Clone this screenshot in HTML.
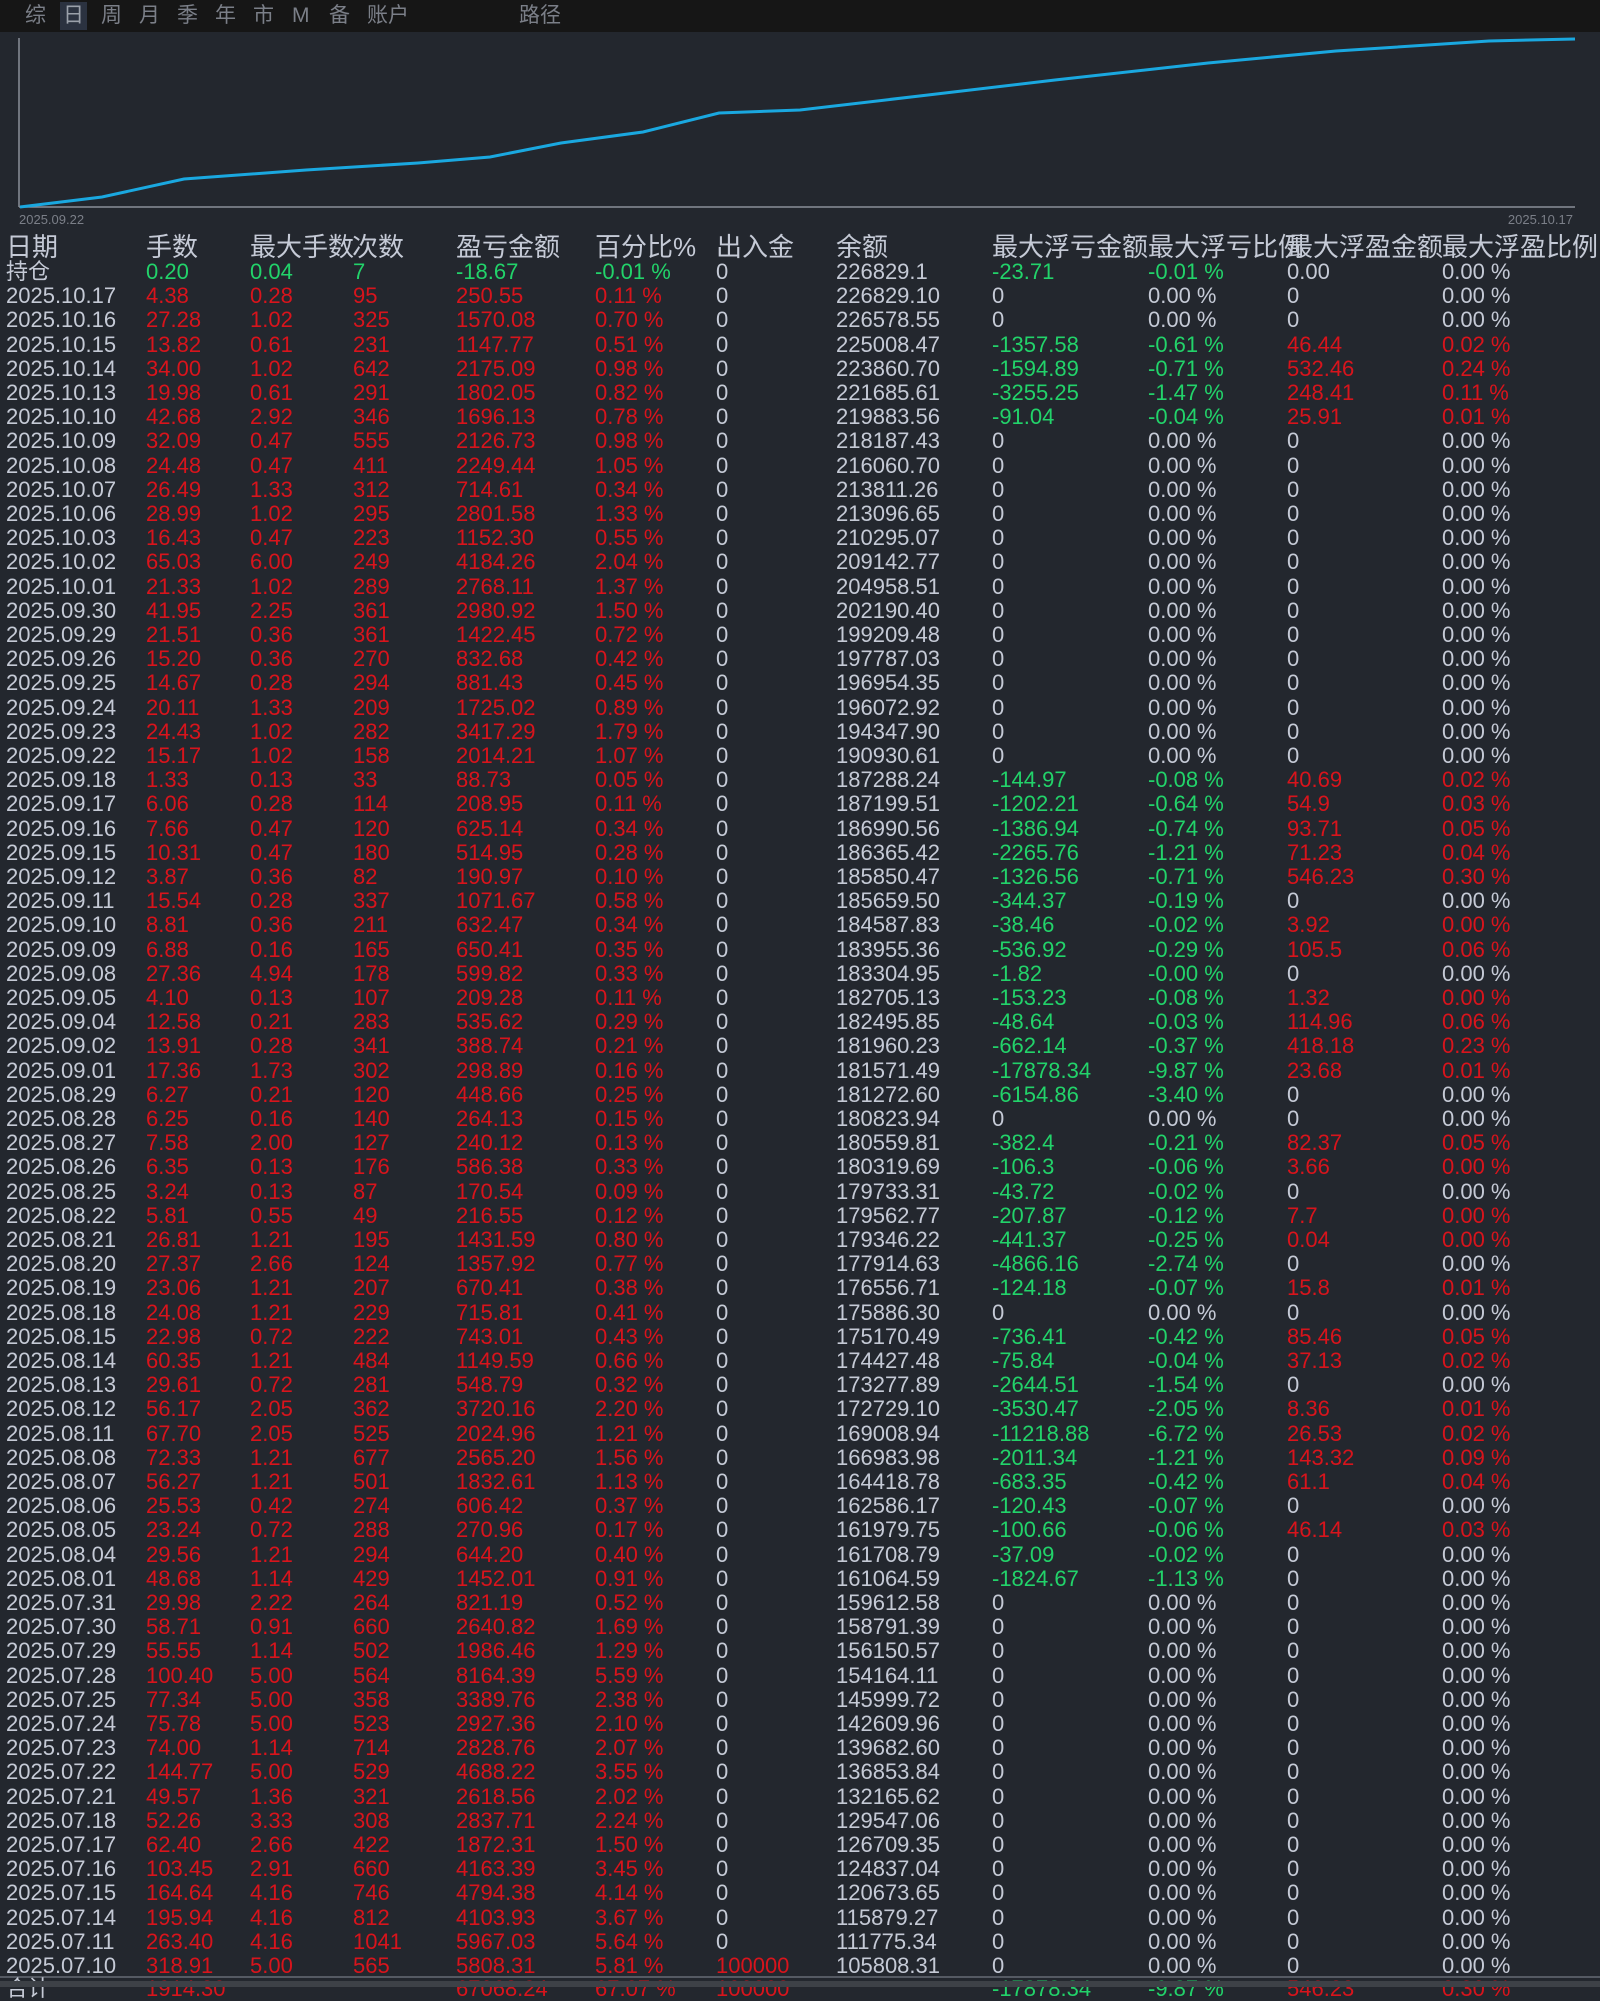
<!DOCTYPE html>
<html><head><meta charset="utf-8">
<style>
html,body{margin:0;padding:0;}
body{width:1600px;height:1987px;background:#23272e;position:relative;overflow:hidden;font-family:"Liberation Sans","Noto Sans CJK SC",sans-serif;color:#c5cad6;}
.top{position:absolute;left:0;top:0;width:1600px;height:32px;background:#161616;}
.tab{position:absolute;top:2px;font-size:21px;color:#7b7f88;line-height:28px;}
.sel{background:#2b3240;color:#9aa0aa;padding:0 3px;}
.r{position:absolute;left:0;height:24px;line-height:24px;font-size:22px;white-space:nowrap;width:1600px;}
.r span{position:absolute;top:0;}
.r span:nth-child(1){left:6px}
.r span:nth-child(2){left:146px}
.r span:nth-child(3){left:250px}
.r span:nth-child(4){left:353px}
.r span:nth-child(5){left:456px}
.r span:nth-child(6){left:595px}
.r span:nth-child(7){left:716px}
.r span:nth-child(8){left:836px}
.r span:nth-child(9){left:992px}
.r span:nth-child(10){left:1148px}
.r span:nth-child(11){left:1287px}
.r span:nth-child(12){left:1442px}
.d span:nth-child(n+2):nth-child(-n+6){color:#d8141c}
.h{font-size:26px;height:28px;line-height:28px;}
.g{color:#22d36a!important}
.e{color:#d8141c!important}
</style></head><body>
<div class="top"></div>
<div class="tab" style="left:25px">综</div>
<div class="tab sel" style="left:60px">日</div>
<div class="tab" style="left:101px">周</div>
<div class="tab" style="left:139px">月</div>
<div class="tab" style="left:177px">季</div>
<div class="tab" style="left:215px">年</div>
<div class="tab" style="left:253px">市</div>
<div class="tab" style="left:292px">M</div>
<div class="tab" style="left:329px">备</div>
<div class="tab" style="left:367px">账户</div>
<div class="tab" style="left:519px">路径</div>

<svg style="position:absolute;left:0;top:0" width="1600" height="230">
<line x1="19" y1="38" x2="19" y2="207" stroke="#8a8f98" stroke-width="1.5"/>
<line x1="19" y1="207" x2="1575" y2="207" stroke="#8a8f98" stroke-width="1.5"/>
<polyline fill="none" stroke="#1aa8e0" stroke-width="3" points="20,207 102,197 184,179 306,170 418,163 490,157 561,143 643,132 719,113 800,110 928,95 1055,80 1208,63 1336,51 1489,41 1575,39"/>
<text x="19" y="224" font-family="Liberation Sans" font-size="13" fill="#7b7f88">2025.09.22</text>
<text x="1573" y="224" font-family="Liberation Sans" font-size="13" fill="#7b7f88" text-anchor="end">2025.10.17</text>
</svg>

<div class="r h" style="top:233px"><span>日期</span><span>手数</span><span>最大手数</span><span style="left:352px">次数</span><span>盈亏金额</span><span>百分比%</span><span>出入金</span><span>余额</span><span>最大浮亏金额</span><span>最大浮亏比例</span><span>最大浮盈金额</span><span>最大浮盈比例</span></div>

<div class="r" style="top:260px"><span>持仓</span><span class="g">0.20</span><span class="g">0.04</span><span class="g">7</span><span class="g">-18.67</span><span class="g">-0.01 %</span><span>0</span><span>226829.1</span><span class="g">-23.71</span><span class="g">-0.01 %</span><span>0.00</span><span>0.00 %</span></div>
<div class="r d" style="top:284px"><span>2025.10.17</span><span>4.38</span><span>0.28</span><span>95</span><span>250.55</span><span>0.11 %</span><span>0</span><span>226829.10</span><span>0</span><span>0.00 %</span><span>0</span><span>0.00 %</span></div>
<div class="r d" style="top:308px"><span>2025.10.16</span><span>27.28</span><span>1.02</span><span>325</span><span>1570.08</span><span>0.70 %</span><span>0</span><span>226578.55</span><span>0</span><span>0.00 %</span><span>0</span><span>0.00 %</span></div>
<div class="r d" style="top:333px"><span>2025.10.15</span><span>13.82</span><span>0.61</span><span>231</span><span>1147.77</span><span>0.51 %</span><span>0</span><span>225008.47</span><span class="g">-1357.58</span><span class="g">-0.61 %</span><span class="e">46.44</span><span class="e">0.02 %</span></div>
<div class="r d" style="top:357px"><span>2025.10.14</span><span>34.00</span><span>1.02</span><span>642</span><span>2175.09</span><span>0.98 %</span><span>0</span><span>223860.70</span><span class="g">-1594.89</span><span class="g">-0.71 %</span><span class="e">532.46</span><span class="e">0.24 %</span></div>
<div class="r d" style="top:381px"><span>2025.10.13</span><span>19.98</span><span>0.61</span><span>291</span><span>1802.05</span><span>0.82 %</span><span>0</span><span>221685.61</span><span class="g">-3255.25</span><span class="g">-1.47 %</span><span class="e">248.41</span><span class="e">0.11 %</span></div>
<div class="r d" style="top:405px"><span>2025.10.10</span><span>42.68</span><span>2.92</span><span>346</span><span>1696.13</span><span>0.78 %</span><span>0</span><span>219883.56</span><span class="g">-91.04</span><span class="g">-0.04 %</span><span class="e">25.91</span><span class="e">0.01 %</span></div>
<div class="r d" style="top:429px"><span>2025.10.09</span><span>32.09</span><span>0.47</span><span>555</span><span>2126.73</span><span>0.98 %</span><span>0</span><span>218187.43</span><span>0</span><span>0.00 %</span><span>0</span><span>0.00 %</span></div>
<div class="r d" style="top:454px"><span>2025.10.08</span><span>24.48</span><span>0.47</span><span>411</span><span>2249.44</span><span>1.05 %</span><span>0</span><span>216060.70</span><span>0</span><span>0.00 %</span><span>0</span><span>0.00 %</span></div>
<div class="r d" style="top:478px"><span>2025.10.07</span><span>26.49</span><span>1.33</span><span>312</span><span>714.61</span><span>0.34 %</span><span>0</span><span>213811.26</span><span>0</span><span>0.00 %</span><span>0</span><span>0.00 %</span></div>
<div class="r d" style="top:502px"><span>2025.10.06</span><span>28.99</span><span>1.02</span><span>295</span><span>2801.58</span><span>1.33 %</span><span>0</span><span>213096.65</span><span>0</span><span>0.00 %</span><span>0</span><span>0.00 %</span></div>
<div class="r d" style="top:526px"><span>2025.10.03</span><span>16.43</span><span>0.47</span><span>223</span><span>1152.30</span><span>0.55 %</span><span>0</span><span>210295.07</span><span>0</span><span>0.00 %</span><span>0</span><span>0.00 %</span></div>
<div class="r d" style="top:550px"><span>2025.10.02</span><span>65.03</span><span>6.00</span><span>249</span><span>4184.26</span><span>2.04 %</span><span>0</span><span>209142.77</span><span>0</span><span>0.00 %</span><span>0</span><span>0.00 %</span></div>
<div class="r d" style="top:575px"><span>2025.10.01</span><span>21.33</span><span>1.02</span><span>289</span><span>2768.11</span><span>1.37 %</span><span>0</span><span>204958.51</span><span>0</span><span>0.00 %</span><span>0</span><span>0.00 %</span></div>
<div class="r d" style="top:599px"><span>2025.09.30</span><span>41.95</span><span>2.25</span><span>361</span><span>2980.92</span><span>1.50 %</span><span>0</span><span>202190.40</span><span>0</span><span>0.00 %</span><span>0</span><span>0.00 %</span></div>
<div class="r d" style="top:623px"><span>2025.09.29</span><span>21.51</span><span>0.36</span><span>361</span><span>1422.45</span><span>0.72 %</span><span>0</span><span>199209.48</span><span>0</span><span>0.00 %</span><span>0</span><span>0.00 %</span></div>
<div class="r d" style="top:647px"><span>2025.09.26</span><span>15.20</span><span>0.36</span><span>270</span><span>832.68</span><span>0.42 %</span><span>0</span><span>197787.03</span><span>0</span><span>0.00 %</span><span>0</span><span>0.00 %</span></div>
<div class="r d" style="top:671px"><span>2025.09.25</span><span>14.67</span><span>0.28</span><span>294</span><span>881.43</span><span>0.45 %</span><span>0</span><span>196954.35</span><span>0</span><span>0.00 %</span><span>0</span><span>0.00 %</span></div>
<div class="r d" style="top:696px"><span>2025.09.24</span><span>20.11</span><span>1.33</span><span>209</span><span>1725.02</span><span>0.89 %</span><span>0</span><span>196072.92</span><span>0</span><span>0.00 %</span><span>0</span><span>0.00 %</span></div>
<div class="r d" style="top:720px"><span>2025.09.23</span><span>24.43</span><span>1.02</span><span>282</span><span>3417.29</span><span>1.79 %</span><span>0</span><span>194347.90</span><span>0</span><span>0.00 %</span><span>0</span><span>0.00 %</span></div>
<div class="r d" style="top:744px"><span>2025.09.22</span><span>15.17</span><span>1.02</span><span>158</span><span>2014.21</span><span>1.07 %</span><span>0</span><span>190930.61</span><span>0</span><span>0.00 %</span><span>0</span><span>0.00 %</span></div>
<div class="r d" style="top:768px"><span>2025.09.18</span><span>1.33</span><span>0.13</span><span>33</span><span>88.73</span><span>0.05 %</span><span>0</span><span>187288.24</span><span class="g">-144.97</span><span class="g">-0.08 %</span><span class="e">40.69</span><span class="e">0.02 %</span></div>
<div class="r d" style="top:792px"><span>2025.09.17</span><span>6.06</span><span>0.28</span><span>114</span><span>208.95</span><span>0.11 %</span><span>0</span><span>187199.51</span><span class="g">-1202.21</span><span class="g">-0.64 %</span><span class="e">54.9</span><span class="e">0.03 %</span></div>
<div class="r d" style="top:817px"><span>2025.09.16</span><span>7.66</span><span>0.47</span><span>120</span><span>625.14</span><span>0.34 %</span><span>0</span><span>186990.56</span><span class="g">-1386.94</span><span class="g">-0.74 %</span><span class="e">93.71</span><span class="e">0.05 %</span></div>
<div class="r d" style="top:841px"><span>2025.09.15</span><span>10.31</span><span>0.47</span><span>180</span><span>514.95</span><span>0.28 %</span><span>0</span><span>186365.42</span><span class="g">-2265.76</span><span class="g">-1.21 %</span><span class="e">71.23</span><span class="e">0.04 %</span></div>
<div class="r d" style="top:865px"><span>2025.09.12</span><span>3.87</span><span>0.36</span><span>82</span><span>190.97</span><span>0.10 %</span><span>0</span><span>185850.47</span><span class="g">-1326.56</span><span class="g">-0.71 %</span><span class="e">546.23</span><span class="e">0.30 %</span></div>
<div class="r d" style="top:889px"><span>2025.09.11</span><span>15.54</span><span>0.28</span><span>337</span><span>1071.67</span><span>0.58 %</span><span>0</span><span>185659.50</span><span class="g">-344.37</span><span class="g">-0.19 %</span><span>0</span><span>0.00 %</span></div>
<div class="r d" style="top:913px"><span>2025.09.10</span><span>8.81</span><span>0.36</span><span>211</span><span>632.47</span><span>0.34 %</span><span>0</span><span>184587.83</span><span class="g">-38.46</span><span class="g">-0.02 %</span><span class="e">3.92</span><span class="e">0.00 %</span></div>
<div class="r d" style="top:938px"><span>2025.09.09</span><span>6.88</span><span>0.16</span><span>165</span><span>650.41</span><span>0.35 %</span><span>0</span><span>183955.36</span><span class="g">-536.92</span><span class="g">-0.29 %</span><span class="e">105.5</span><span class="e">0.06 %</span></div>
<div class="r d" style="top:962px"><span>2025.09.08</span><span>27.36</span><span>4.94</span><span>178</span><span>599.82</span><span>0.33 %</span><span>0</span><span>183304.95</span><span class="g">-1.82</span><span class="g">-0.00 %</span><span>0</span><span>0.00 %</span></div>
<div class="r d" style="top:986px"><span>2025.09.05</span><span>4.10</span><span>0.13</span><span>107</span><span>209.28</span><span>0.11 %</span><span>0</span><span>182705.13</span><span class="g">-153.23</span><span class="g">-0.08 %</span><span class="e">1.32</span><span class="e">0.00 %</span></div>
<div class="r d" style="top:1010px"><span>2025.09.04</span><span>12.58</span><span>0.21</span><span>283</span><span>535.62</span><span>0.29 %</span><span>0</span><span>182495.85</span><span class="g">-48.64</span><span class="g">-0.03 %</span><span class="e">114.96</span><span class="e">0.06 %</span></div>
<div class="r d" style="top:1034px"><span>2025.09.02</span><span>13.91</span><span>0.28</span><span>341</span><span>388.74</span><span>0.21 %</span><span>0</span><span>181960.23</span><span class="g">-662.14</span><span class="g">-0.37 %</span><span class="e">418.18</span><span class="e">0.23 %</span></div>
<div class="r d" style="top:1059px"><span>2025.09.01</span><span>17.36</span><span>1.73</span><span>302</span><span>298.89</span><span>0.16 %</span><span>0</span><span>181571.49</span><span class="g">-17878.34</span><span class="g">-9.87 %</span><span class="e">23.68</span><span class="e">0.01 %</span></div>
<div class="r d" style="top:1083px"><span>2025.08.29</span><span>6.27</span><span>0.21</span><span>120</span><span>448.66</span><span>0.25 %</span><span>0</span><span>181272.60</span><span class="g">-6154.86</span><span class="g">-3.40 %</span><span>0</span><span>0.00 %</span></div>
<div class="r d" style="top:1107px"><span>2025.08.28</span><span>6.25</span><span>0.16</span><span>140</span><span>264.13</span><span>0.15 %</span><span>0</span><span>180823.94</span><span>0</span><span>0.00 %</span><span>0</span><span>0.00 %</span></div>
<div class="r d" style="top:1131px"><span>2025.08.27</span><span>7.58</span><span>2.00</span><span>127</span><span>240.12</span><span>0.13 %</span><span>0</span><span>180559.81</span><span class="g">-382.4</span><span class="g">-0.21 %</span><span class="e">82.37</span><span class="e">0.05 %</span></div>
<div class="r d" style="top:1155px"><span>2025.08.26</span><span>6.35</span><span>0.13</span><span>176</span><span>586.38</span><span>0.33 %</span><span>0</span><span>180319.69</span><span class="g">-106.3</span><span class="g">-0.06 %</span><span class="e">3.66</span><span class="e">0.00 %</span></div>
<div class="r d" style="top:1180px"><span>2025.08.25</span><span>3.24</span><span>0.13</span><span>87</span><span>170.54</span><span>0.09 %</span><span>0</span><span>179733.31</span><span class="g">-43.72</span><span class="g">-0.02 %</span><span>0</span><span>0.00 %</span></div>
<div class="r d" style="top:1204px"><span>2025.08.22</span><span>5.81</span><span>0.55</span><span>49</span><span>216.55</span><span>0.12 %</span><span>0</span><span>179562.77</span><span class="g">-207.87</span><span class="g">-0.12 %</span><span class="e">7.7</span><span class="e">0.00 %</span></div>
<div class="r d" style="top:1228px"><span>2025.08.21</span><span>26.81</span><span>1.21</span><span>195</span><span>1431.59</span><span>0.80 %</span><span>0</span><span>179346.22</span><span class="g">-441.37</span><span class="g">-0.25 %</span><span class="e">0.04</span><span class="e">0.00 %</span></div>
<div class="r d" style="top:1252px"><span>2025.08.20</span><span>27.37</span><span>2.66</span><span>124</span><span>1357.92</span><span>0.77 %</span><span>0</span><span>177914.63</span><span class="g">-4866.16</span><span class="g">-2.74 %</span><span>0</span><span>0.00 %</span></div>
<div class="r d" style="top:1276px"><span>2025.08.19</span><span>23.06</span><span>1.21</span><span>207</span><span>670.41</span><span>0.38 %</span><span>0</span><span>176556.71</span><span class="g">-124.18</span><span class="g">-0.07 %</span><span class="e">15.8</span><span class="e">0.01 %</span></div>
<div class="r d" style="top:1301px"><span>2025.08.18</span><span>24.08</span><span>1.21</span><span>229</span><span>715.81</span><span>0.41 %</span><span>0</span><span>175886.30</span><span>0</span><span>0.00 %</span><span>0</span><span>0.00 %</span></div>
<div class="r d" style="top:1325px"><span>2025.08.15</span><span>22.98</span><span>0.72</span><span>222</span><span>743.01</span><span>0.43 %</span><span>0</span><span>175170.49</span><span class="g">-736.41</span><span class="g">-0.42 %</span><span class="e">85.46</span><span class="e">0.05 %</span></div>
<div class="r d" style="top:1349px"><span>2025.08.14</span><span>60.35</span><span>1.21</span><span>484</span><span>1149.59</span><span>0.66 %</span><span>0</span><span>174427.48</span><span class="g">-75.84</span><span class="g">-0.04 %</span><span class="e">37.13</span><span class="e">0.02 %</span></div>
<div class="r d" style="top:1373px"><span>2025.08.13</span><span>29.61</span><span>0.72</span><span>281</span><span>548.79</span><span>0.32 %</span><span>0</span><span>173277.89</span><span class="g">-2644.51</span><span class="g">-1.54 %</span><span>0</span><span>0.00 %</span></div>
<div class="r d" style="top:1397px"><span>2025.08.12</span><span>56.17</span><span>2.05</span><span>362</span><span>3720.16</span><span>2.20 %</span><span>0</span><span>172729.10</span><span class="g">-3530.47</span><span class="g">-2.05 %</span><span class="e">8.36</span><span class="e">0.01 %</span></div>
<div class="r d" style="top:1422px"><span>2025.08.11</span><span>67.70</span><span>2.05</span><span>525</span><span>2024.96</span><span>1.21 %</span><span>0</span><span>169008.94</span><span class="g">-11218.88</span><span class="g">-6.72 %</span><span class="e">26.53</span><span class="e">0.02 %</span></div>
<div class="r d" style="top:1446px"><span>2025.08.08</span><span>72.33</span><span>1.21</span><span>677</span><span>2565.20</span><span>1.56 %</span><span>0</span><span>166983.98</span><span class="g">-2011.34</span><span class="g">-1.21 %</span><span class="e">143.32</span><span class="e">0.09 %</span></div>
<div class="r d" style="top:1470px"><span>2025.08.07</span><span>56.27</span><span>1.21</span><span>501</span><span>1832.61</span><span>1.13 %</span><span>0</span><span>164418.78</span><span class="g">-683.35</span><span class="g">-0.42 %</span><span class="e">61.1</span><span class="e">0.04 %</span></div>
<div class="r d" style="top:1494px"><span>2025.08.06</span><span>25.53</span><span>0.42</span><span>274</span><span>606.42</span><span>0.37 %</span><span>0</span><span>162586.17</span><span class="g">-120.43</span><span class="g">-0.07 %</span><span>0</span><span>0.00 %</span></div>
<div class="r d" style="top:1518px"><span>2025.08.05</span><span>23.24</span><span>0.72</span><span>288</span><span>270.96</span><span>0.17 %</span><span>0</span><span>161979.75</span><span class="g">-100.66</span><span class="g">-0.06 %</span><span class="e">46.14</span><span class="e">0.03 %</span></div>
<div class="r d" style="top:1543px"><span>2025.08.04</span><span>29.56</span><span>1.21</span><span>294</span><span>644.20</span><span>0.40 %</span><span>0</span><span>161708.79</span><span class="g">-37.09</span><span class="g">-0.02 %</span><span>0</span><span>0.00 %</span></div>
<div class="r d" style="top:1567px"><span>2025.08.01</span><span>48.68</span><span>1.14</span><span>429</span><span>1452.01</span><span>0.91 %</span><span>0</span><span>161064.59</span><span class="g">-1824.67</span><span class="g">-1.13 %</span><span>0</span><span>0.00 %</span></div>
<div class="r d" style="top:1591px"><span>2025.07.31</span><span>29.98</span><span>2.22</span><span>264</span><span>821.19</span><span>0.52 %</span><span>0</span><span>159612.58</span><span>0</span><span>0.00 %</span><span>0</span><span>0.00 %</span></div>
<div class="r d" style="top:1615px"><span>2025.07.30</span><span>58.71</span><span>0.91</span><span>660</span><span>2640.82</span><span>1.69 %</span><span>0</span><span>158791.39</span><span>0</span><span>0.00 %</span><span>0</span><span>0.00 %</span></div>
<div class="r d" style="top:1639px"><span>2025.07.29</span><span>55.55</span><span>1.14</span><span>502</span><span>1986.46</span><span>1.29 %</span><span>0</span><span>156150.57</span><span>0</span><span>0.00 %</span><span>0</span><span>0.00 %</span></div>
<div class="r d" style="top:1664px"><span>2025.07.28</span><span>100.40</span><span>5.00</span><span>564</span><span>8164.39</span><span>5.59 %</span><span>0</span><span>154164.11</span><span>0</span><span>0.00 %</span><span>0</span><span>0.00 %</span></div>
<div class="r d" style="top:1688px"><span>2025.07.25</span><span>77.34</span><span>5.00</span><span>358</span><span>3389.76</span><span>2.38 %</span><span>0</span><span>145999.72</span><span>0</span><span>0.00 %</span><span>0</span><span>0.00 %</span></div>
<div class="r d" style="top:1712px"><span>2025.07.24</span><span>75.78</span><span>5.00</span><span>523</span><span>2927.36</span><span>2.10 %</span><span>0</span><span>142609.96</span><span>0</span><span>0.00 %</span><span>0</span><span>0.00 %</span></div>
<div class="r d" style="top:1736px"><span>2025.07.23</span><span>74.00</span><span>1.14</span><span>714</span><span>2828.76</span><span>2.07 %</span><span>0</span><span>139682.60</span><span>0</span><span>0.00 %</span><span>0</span><span>0.00 %</span></div>
<div class="r d" style="top:1760px"><span>2025.07.22</span><span>144.77</span><span>5.00</span><span>529</span><span>4688.22</span><span>3.55 %</span><span>0</span><span>136853.84</span><span>0</span><span>0.00 %</span><span>0</span><span>0.00 %</span></div>
<div class="r d" style="top:1785px"><span>2025.07.21</span><span>49.57</span><span>1.36</span><span>321</span><span>2618.56</span><span>2.02 %</span><span>0</span><span>132165.62</span><span>0</span><span>0.00 %</span><span>0</span><span>0.00 %</span></div>
<div class="r d" style="top:1809px"><span>2025.07.18</span><span>52.26</span><span>3.33</span><span>308</span><span>2837.71</span><span>2.24 %</span><span>0</span><span>129547.06</span><span>0</span><span>0.00 %</span><span>0</span><span>0.00 %</span></div>
<div class="r d" style="top:1833px"><span>2025.07.17</span><span>62.40</span><span>2.66</span><span>422</span><span>1872.31</span><span>1.50 %</span><span>0</span><span>126709.35</span><span>0</span><span>0.00 %</span><span>0</span><span>0.00 %</span></div>
<div class="r d" style="top:1857px"><span>2025.07.16</span><span>103.45</span><span>2.91</span><span>660</span><span>4163.39</span><span>3.45 %</span><span>0</span><span>124837.04</span><span>0</span><span>0.00 %</span><span>0</span><span>0.00 %</span></div>
<div class="r d" style="top:1881px"><span>2025.07.15</span><span>164.64</span><span>4.16</span><span>746</span><span>4794.38</span><span>4.14 %</span><span>0</span><span>120673.65</span><span>0</span><span>0.00 %</span><span>0</span><span>0.00 %</span></div>
<div class="r d" style="top:1906px"><span>2025.07.14</span><span>195.94</span><span>4.16</span><span>812</span><span>4103.93</span><span>3.67 %</span><span>0</span><span>115879.27</span><span>0</span><span>0.00 %</span><span>0</span><span>0.00 %</span></div>
<div class="r d" style="top:1930px"><span>2025.07.11</span><span>263.40</span><span>4.16</span><span>1041</span><span>5967.03</span><span>5.64 %</span><span>0</span><span>111775.34</span><span>0</span><span>0.00 %</span><span>0</span><span>0.00 %</span></div>
<div class="r d" style="top:1954px"><span>2025.07.10</span><span>318.91</span><span>5.00</span><span>565</span><span>5808.31</span><span>5.81 %</span><span class="e">100000</span><span>105808.31</span><span>0</span><span>0.00 %</span><span>0</span><span>0.00 %</span></div>
<div style="position:absolute;left:0;top:1976px;width:1600px;height:2px;background:#555a63"></div>
<div class="r d" style="top:1977px"><span>合计</span><span>1914.30</span><span></span><span></span><span>67068.24</span><span>67.07 %</span><span class="e">100000</span><span></span><span class="g">-17878.34</span><span class="g">-9.87 %</span><span class="e">546.23</span><span class="e">0.30 %</span></div>
<div style="position:absolute;left:0;top:1981px;width:1600px;height:6px;background:#3d4147"></div>
</body></html>
